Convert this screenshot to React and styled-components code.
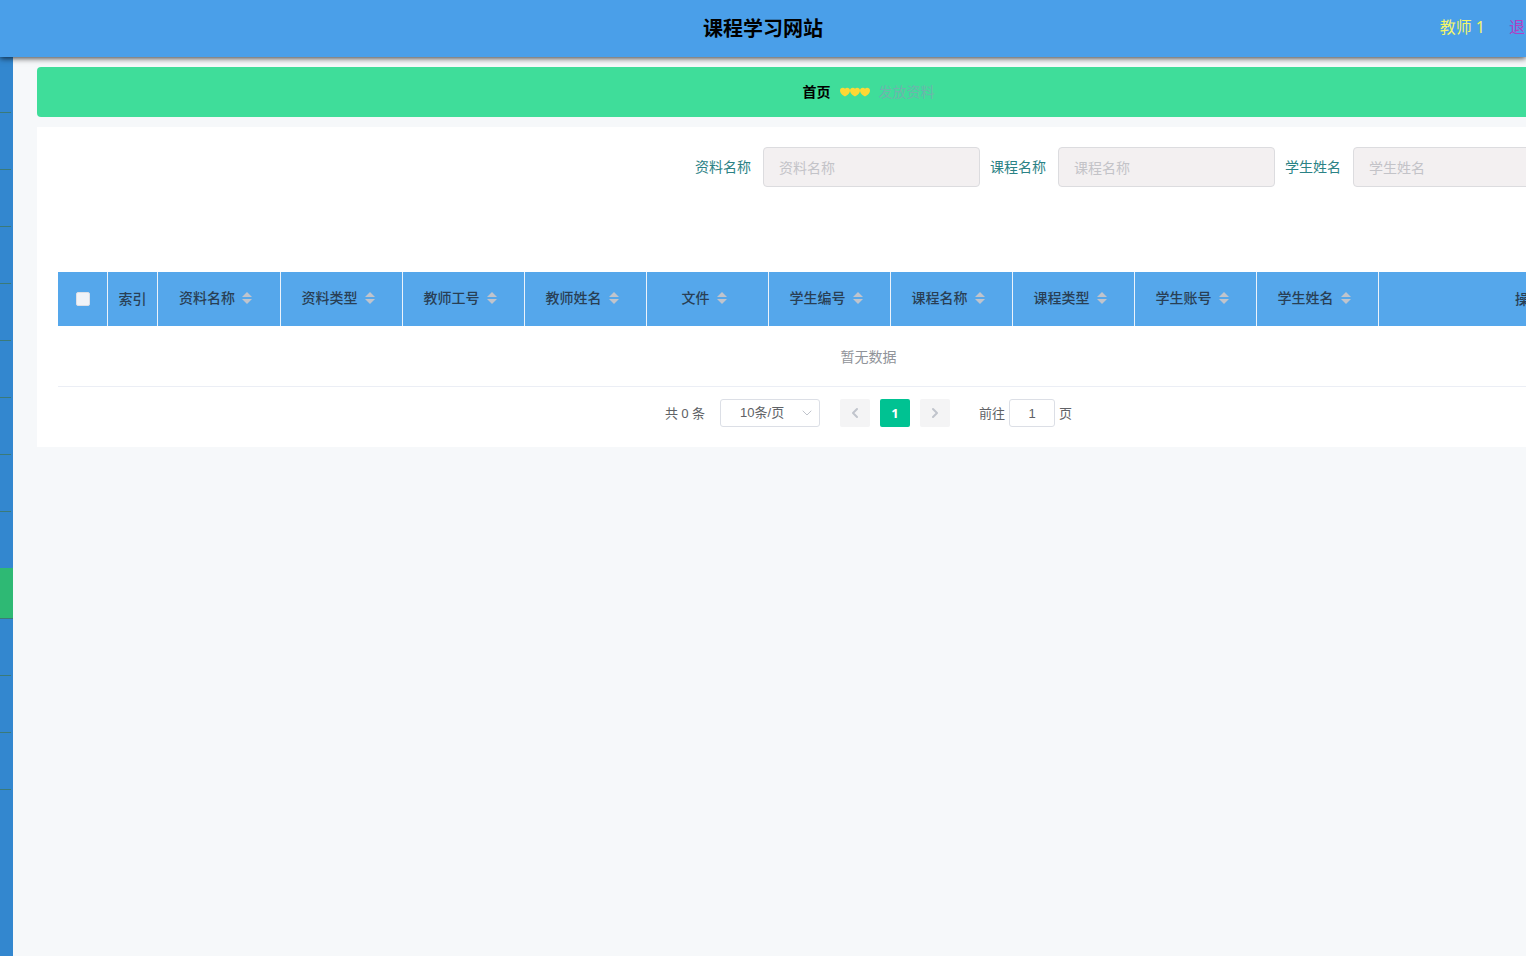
import React, { useState } from "react";
import styled, { createGlobalStyle } from "styled-components";
import { ChevronDown, ChevronLeft, ChevronRight } from "lucide-react";

const menuItems = [
  "item", "item", "item", "item", "item", "item", "item", "item",
  "open", "active",
  "item", "item", "item",
];

const filters = [
  { id: "materialName", label: "资料名称" },
  { id: "courseName", label: "课程名称" },
  { id: "studentName", label: "学生姓名" },
];

const columns = [
  "资料名称",
  "资料类型",
  "教师工号",
  "教师姓名",
  "文件",
  "学生编号",
  "课程名称",
  "课程类型",
  "学生账号",
  "学生姓名",
];

export default function App() {
  const [page, setPage] = useState("1");

  return (
    <Page>
      <GlobalStyle />
      <Header>
        <h1>课程学习网站</h1>
        <UserBox>
          <span>教师 1</span>
          <LogoutButton type="button">退出</LogoutButton>
        </UserBox>
      </Header>

      <Body>
        <Sidebar>
          {menuItems.map((kind, i) => (
            <MenuItem key={i} $kind={kind} />
          ))}
        </Sidebar>

        <Main>
          <Breadcrumb>
            <a href="#home">首页</a>
            <Hearts />
            <span>发放资料</span>
          </Breadcrumb>

          <Card>
            <FilterForm>
              {filters.map((f) => (
                <Field key={f.id}>
                  <label htmlFor={f.id}>{f.label}</label>
                  <input id={f.id} type="text" placeholder={f.label} />
                </Field>
              ))}
            </FilterForm>

            <DataTable>
              <colgroup>
                <Col $width={50} />
                <Col $width={50} />
                <Col $width={123} />
                {columns.slice(1).map((c) => (
                  <Col key={c} $width={122} />
                ))}
                <Col $width={300} />
              </colgroup>
              <thead>
                <tr>
                  <th>
                    <Checkbox type="checkbox" aria-label="全选" />
                  </th>
                  <th>索引</th>
                  {columns.map((c) => (
                    <th key={c}>
                      <SortLabel>
                        {c}
                        <SortIcon />
                      </SortLabel>
                    </th>
                  ))}
                  <th>操作</th>
                </tr>
              </thead>
              <tbody>
                <tr>
                  <td colSpan={columns.length + 3}>暂无数据</td>
                </tr>
              </tbody>
            </DataTable>

            <Pagination>
              <span>共 0 条</span>
              <SelectBox>
                <select aria-label="每页条数" defaultValue="10">
                  <option value="10">10条/页</option>
                </select>
                <ChevronDown size={16} strokeWidth={1.5} />
              </SelectBox>
              <Pager>
                <PageButton type="button" aria-label="上一页" disabled>
                  <ChevronLeft size={16} strokeWidth={3} />
                </PageButton>
                <PageButton type="button" $active>
                  1
                </PageButton>
                <PageButton type="button" aria-label="下一页" disabled>
                  <ChevronRight size={16} strokeWidth={3} />
                </PageButton>
              </Pager>
              <Jump>
                前往
                <input
                  type="text"
                  value={page}
                  onChange={(e) => setPage(e.target.value)}
                />
                页
              </Jump>
            </Pagination>
          </Card>
        </Main>
      </Body>
    </Page>
  );
}

function Hearts() {
  return (
    <svg width="30" height="10" viewBox="0 0 30 10" fill="#fdd835" aria-hidden="true">
      {[0, 10, 20].map((x) => (
        <path
          key={x}
          transform={`translate(${x} 0)`}
          d="M5 9.6C3 8.6 0 6.6 0 3.6 0 1.8 1.2 0.8 2.7 0.8 3.8 0.8 4.6 1.1 5 1.7 5.4 1.1 6.2 0.8 7.3 0.8 8.8 0.8 10 1.8 10 3.6 10 6.6 7 8.6 5 9.6Z"
        />
      ))}
    </svg>
  );
}

function SortIcon() {
  return (
    <svg width="24" height="14" viewBox="0 0 24 14" fill="#c0c4cc" aria-hidden="true">
      <path d="M7 6L12 1L17 6Z" />
      <path d="M7 8L12 13L17 8Z" />
    </svg>
  );
}

const GlobalStyle = createGlobalStyle`
  * {
    box-sizing: border-box;
  }
  body {
    margin: 0;
    background: #f6f8fa;
    font-family: "Noto Sans", "Noto Sans CJK SC", sans-serif;
    font-size: 14px;
    line-height: 20px;
  }
  button, input, select {
    font-family: inherit;
    line-height: 20px;
    outline: none;
  }
`;

const Page = styled.div`
  display: flex;
  flex-direction: column;
  min-height: 100vh;
  overflow-x: hidden;
`;

const Header = styled.header`
  position: relative;
  z-index: 1;
  display: grid;
  grid-template-columns: 1fr auto 1fr;
  align-items: center;
  height: 57px;
  background: #4a9fe9;
  box-shadow: 0 1px 6px rgba(0, 0, 0, 0.8);
  h1 {
    grid-column: 2;
    margin: 0;
    font-size: 20px;
    line-height: 28px;
    font-weight: 700;
    color: #000;
  }
`;

const UserBox = styled.div`
  display: flex;
  justify-content: flex-end;
  gap: 24px;
  margin-right: -15px;
  padding-bottom: 4px;
  font-size: 16px;
  line-height: 24px;
  color: #f3f56a;
`;

const LogoutButton = styled.button`
  padding: 0;
  border: none;
  background: none;
  font-size: 16px;
  line-height: 24px;
  color: #b13fc4;
  cursor: pointer;
`;

const Body = styled.div`
  display: flex;
  flex: 1;
`;

const Sidebar = styled.nav`
  flex: 0 0 13px;
  background: #3387cf;
`;

const MenuItem = styled.div`
  height: ${({ $kind }) =>
    $kind === "active" ? "51px" : $kind === "open" ? "56px" : "57px"};
  margin-right: ${({ $kind }) => ($kind === "active" ? "0" : "2px")};
  border-bottom: ${({ $kind }) => ($kind === "open" ? "none" : "1px solid #3b7a78")};
  background: ${({ $kind }) => ($kind === "active" ? "#2eb974" : "transparent")};
  &:first-child {
    height: 56px;
  }
`;

const Main = styled.main`
  flex: 1 0 min-content;
  display: flex;
  flex-direction: column;
  gap: 10px;
  padding: 10px 0 10px 24px;
`;

const Breadcrumb = styled.nav`
  display: flex;
  justify-content: center;
  align-items: center;
  gap: 9px;
  height: 50px;
  border-radius: 4px;
  background: #3fdd9a;
  a {
    color: #000;
    font-weight: 700;
    text-decoration: none;
  }
  span {
    color: #6db5ac;
  }
`;

const Card = styled.section`
  padding: 20px 21px;
  background: #fff;
`;

const FilterForm = styled.form`
  display: flex;
  justify-content: flex-end;
  gap: 10px;
  margin-bottom: 85px;
  padding-right: 109px;
`;

const Field = styled.div`
  display: flex;
  align-items: center;
  gap: 12px;
  label {
    color: #2b8285;
    white-space: nowrap;
  }
  input {
    width: 217px;
    height: 40px;
    padding: 0 15px;
    border: 1px solid #dcdcdf;
    border-radius: 4px;
    background: #f3f0f1;
    font-size: 14px;
    color: #606266;
    &::placeholder {
      color: #c3c3c8;
    }
  }
`;

const DataTable = styled.table`
  width: 100%;
  min-width: 1621px;
  table-layout: fixed;
  border-collapse: separate;
  border-spacing: 0;
  th {
    height: 54px;
    padding: 0;
    border-right: 1px solid #ebf3fb;
    background: #55a7eb;
    font-weight: 500;
    color: #293f55;
    &:last-child {
      border-right: none;
    }
  }
  td {
    height: 61px;
    padding: 2px 0 0;
    border-bottom: 1px solid #ebeef5;
    text-align: center;
    color: #909399;
  }
`;

const Col = styled.col`
  width: ${({ $width }) => $width}px;
`;

const Checkbox = styled.input`
  appearance: none;
  display: block;
  width: 14px;
  height: 14px;
  margin: 0 auto;
  border: 1px solid #dcdfe6;
  border-radius: 2px;
  background: #f0f3f8;
`;

const SortLabel = styled.span`
  display: flex;
  justify-content: center;
  align-items: center;
  padding-bottom: 2px;
`;

const Pagination = styled.div`
  display: flex;
  justify-content: center;
  align-items: center;
  margin-top: 12px;
  font-size: 13px;
  line-height: 28px;
  color: #606266;
`;

const SelectBox = styled.div`
  display: grid;
  align-items: center;
  width: 100px;
  margin: 0 20px 0 15px;
  select,
  svg {
    grid-area: 1 / 1;
  }
  select {
    appearance: none;
    width: 100%;
    height: 28px;
    padding: 0 0 0 19px;
    border: 1px solid #dcdfe6;
    border-radius: 3px;
    background: #fff;
    font-family: "Liberation Sans", "Noto Sans CJK SC", sans-serif;
    font-size: 13px;
    color: #606266;
  }
  svg {
    justify-self: end;
    margin-right: 5px;
    color: #c0c4cc;
    pointer-events: none;
  }
`;

const Pager = styled.div`
  display: flex;
  gap: 10px;
  margin-right: 29px;
`;

const PageButton = styled.button`
  display: flex;
  justify-content: center;
  align-items: center;
  width: 30px;
  height: 28px;
  padding: 0;
  border: none;
  border-radius: 2px;
  background: ${({ $active }) => ($active ? "#00c292" : "#f4f4f5")};
  font-size: 13px;
  font-weight: 700;
  color: ${({ $active }) => ($active ? "#fff" : "#c0c4cc")};
`;

const Jump = styled.label`
  display: flex;
  align-items: center;
  gap: 4px;
  input {
    width: 46px;
    height: 28px;
    padding: 0 3px;
    border: 1px solid #dcdfe6;
    border-radius: 3px;
    font-family: "Liberation Sans", "Noto Sans CJK SC", sans-serif;
    font-size: 13px;
    text-align: center;
    color: #606266;
  }
`;
